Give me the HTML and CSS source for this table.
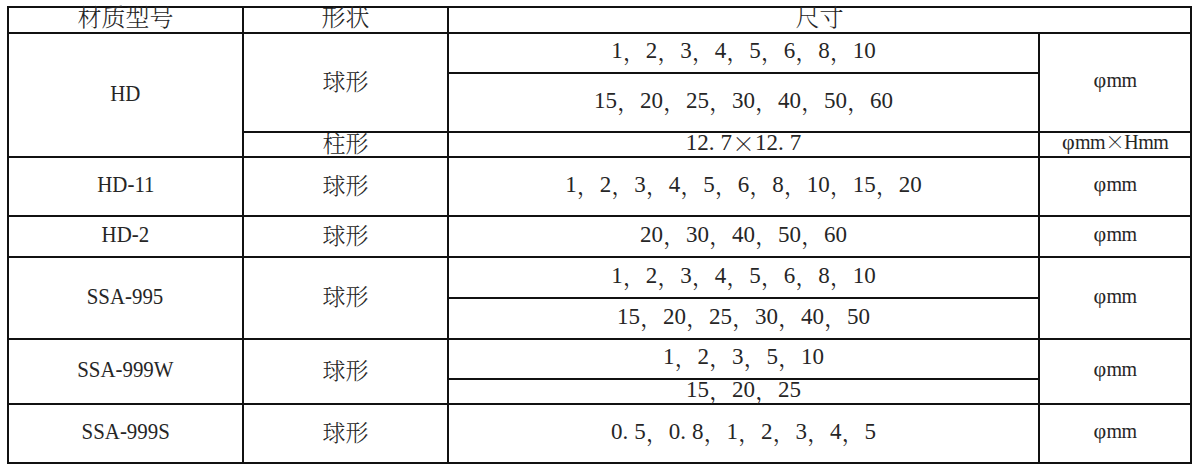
FILE: index.html
```html
<!DOCTYPE html>
<html lang="zh-CN">
<head>
<meta charset="utf-8">
<title>材质型号</title>
<link rel="stylesheet" href="styles.css">
</head>
<body>
<div class="spec">
  <div class="cell head c1 r0">材质型号</div>
  <div class="cell head c2 r0">形状</div>
  <div class="cell head c34 r0">尺寸</div>

  <div class="cell c1 r1-3"><span class="name">HD</span></div>
  <div class="cell c2 r1-2">球形</div>
  <div class="cell c3 r1">1<span class="cm">，</span>2<span class="cm">，</span>3<span class="cm">，</span>4<span class="cm">，</span>5<span class="cm">，</span>6<span class="cm">，</span>8<span class="cm">，</span>10</div>
  <div class="cell unit c4 r1-2"><span class="phi">φ</span>mm</div>
  <div class="cell c3 r2">15<span class="cm">，</span>20<span class="cm">，</span>25<span class="cm">，</span>30<span class="cm">，</span>40<span class="cm">，</span>50<span class="cm">，</span>60</div>
  <div class="cell c2 r3">柱形</div>
  <div class="cell c3 r3">12<span class="dot">.</span>7<span class="cm">×</span>12<span class="dot">.</span>7</div>
  <div class="cell unit c4 r3"><span class="phi">φ</span>mm<span class="cm">×</span>Hmm</div>

  <div class="cell c1 r4"><span class="name">HD-11</span></div>
  <div class="cell c2 r4">球形</div>
  <div class="cell c3 r4">1<span class="cm">，</span>2<span class="cm">，</span>3<span class="cm">，</span>4<span class="cm">，</span>5<span class="cm">，</span>6<span class="cm">，</span>8<span class="cm">，</span>10<span class="cm">，</span>15<span class="cm">，</span>20</div>
  <div class="cell unit c4 r4"><span class="phi">φ</span>mm</div>

  <div class="cell c1 r5"><span class="name">HD-2</span></div>
  <div class="cell c2 r5">球形</div>
  <div class="cell c3 r5">20<span class="cm">，</span>30<span class="cm">，</span>40<span class="cm">，</span>50<span class="cm">，</span>60</div>
  <div class="cell unit c4 r5"><span class="phi">φ</span>mm</div>

  <div class="cell c1 r6-7"><span class="name">SSA-995</span></div>
  <div class="cell c2 r6-7">球形</div>
  <div class="cell c3 r6">1<span class="cm">，</span>2<span class="cm">，</span>3<span class="cm">，</span>4<span class="cm">，</span>5<span class="cm">，</span>6<span class="cm">，</span>8<span class="cm">，</span>10</div>
  <div class="cell unit c4 r6-7"><span class="phi">φ</span>mm</div>
  <div class="cell c3 r7">15<span class="cm">，</span>20<span class="cm">，</span>25<span class="cm">，</span>30<span class="cm">，</span>40<span class="cm">，</span>50</div>

  <div class="cell c1 r8-9"><span class="name">SSA-999W</span></div>
  <div class="cell c2 r8-9">球形</div>
  <div class="cell c3 r8">1<span class="cm">，</span>2<span class="cm">，</span>3<span class="cm">，</span>5<span class="cm">，</span>10</div>
  <div class="cell unit c4 r8-9"><span class="phi">φ</span>mm</div>
  <div class="cell c3 r9">15<span class="cm">，</span>20<span class="cm">，</span>25</div>

  <div class="cell c1 r10"><span class="name">SSA-999S</span></div>
  <div class="cell c2 r10">球形</div>
  <div class="cell c3 r10">0<span class="dot">.</span>5<span class="cm">，</span>0<span class="dot">.</span>8<span class="cm">，</span>1<span class="cm">，</span>2<span class="cm">，</span>3<span class="cm">，</span>4<span class="cm">，</span>5</div>
  <div class="cell unit c4 r10"><span class="phi">φ</span>mm</div>
</div>
</body>
</html>
```

FILE: styles.css
```css
html, body {
  margin: 0;
  padding: 0;
  background: #ffffff;
}

body {
  padding: 6px 0 0 7px;
  font-family: "Liberation Serif", "Noto Serif CJK SC", "Noto Sans CJK SC", serif;
  font-size: 23px;
  color: #262626;
}

.spec {
  width: 1185px;
  box-sizing: border-box;
  display: grid;
  grid-template-columns: 235px 205px 591px 152px;
  grid-template-rows: 26px 40px 59px 25px 59px 41px 41px 41px 40px 25px 59px;
  border-left: 2px solid #111;
  border-top: 2px solid #111;
}

.cell {
  box-sizing: border-box;
  border-right: 2px solid #111;
  border-bottom: 2px solid #111;
  display: flex;
  align-items: center;
  justify-content: center;
  white-space: nowrap;
  line-height: 1;
  padding-bottom: 5px;
}

.cm,
.head,
.c2 {
  font-family: "Noto Serif CJK SC", "Noto Sans CJK SC", sans-serif;
  font-weight: 300;
}

.head {
  font-size: 24px;
  padding-bottom: 8px;
}

.c1 {
  font-size: 24px;
}

.name {
  display: inline-block;
  transform: scaleX(0.87);
}

.dot {
  margin-right: 6px;
}

.unit {
  font-size: 20px;
  letter-spacing: -0.6px;
}

.phi {
  font-size: 22px;
  margin-right: 1px;
}

.c1 { grid-column: 1; }
.c2 { grid-column: 2; }
.c3 { grid-column: 3; }
.c4 { grid-column: 4; }
.c34 { grid-column: 3 / span 2; }

.r0 { grid-row: 1; }
.r1 { grid-row: 2; }
.r2 { grid-row: 3; }
.r3 { grid-row: 4; }
.r4 { grid-row: 5; }
.r5 { grid-row: 6; }
.r6 { grid-row: 7; }
.r7 { grid-row: 8; }
.r8 { grid-row: 9; }
.r9 { grid-row: 10; }
.r10 { grid-row: 11; }
.r1-3 { grid-row: 2 / span 3; }
.r1-2 { grid-row: 2 / span 2; }
.r6-7 { grid-row: 7 / span 2; }
.r8-9 { grid-row: 9 / span 2; }
```
